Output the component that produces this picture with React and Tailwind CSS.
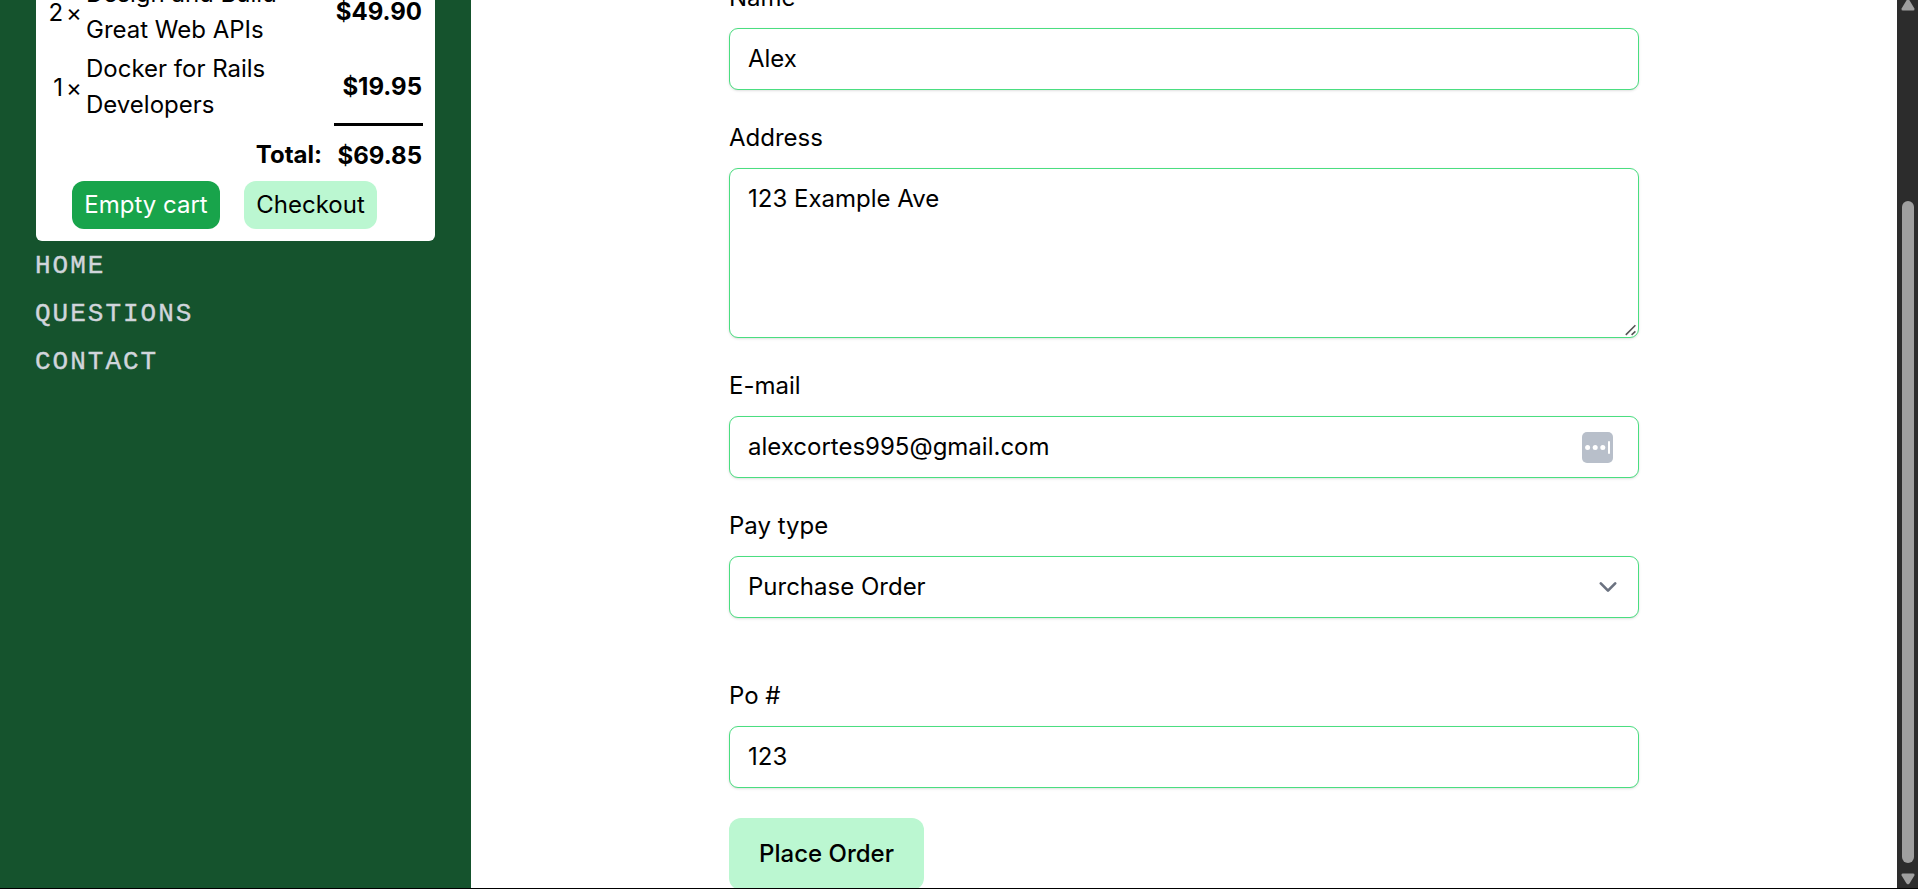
const field =
  "block w-full rounded-[9px] border border-[#4ade80] bg-white px-[18px] py-3 text-2xl leading-9 shadow-sm outline-none";

function Field({ label, className = "", children }) {
  return (
    <div className={className}>
      <label className="block h-9 leading-9">{label}</label>
      <div className="relative mt-3">{children}</div>
    </div>
  );
}

function CartRow({ quantity, lines, price, className = "" }) {
  return (
    <div className={"flex h-[72px] shrink-0 items-center " + className}>
      <div className="w-[38px] shrink-0 pt-px text-right whitespace-nowrap">
        {quantity}
        <span className="ml-[3px]">×</span>
      </div>
      <div className="ml-1 flex-1 whitespace-nowrap">
        {lines.map((line) => (
          <div key={line}>{line}</div>
        ))}
      </div>
      <div className="pr-px pb-px font-bold">{price}</div>
    </div>
  );
}

function Sidebar() {
  return (
    <aside className="h-full w-[471px] shrink-0 overflow-hidden bg-[#15532d] px-9">
      <div className="flex h-[241px] w-[399px] flex-col justify-end rounded-b-md bg-white pr-3 pb-3 pl-2">
        <CartRow quantity="2" lines={["Design and Build", "Great Web APIs"]} price="$49.90" className="mb-[3px]" />
        <CartRow quantity="1" lines={["Docker for Rails", "Developers"]} price="$19.95" />
        <div className="flex h-[58px] shrink-0 items-start justify-end font-bold">
          <div className="mr-3 pt-[14px]">Total:</div>
          <div className="w-[89px] border-t-[3px] border-black pt-3 pr-px text-right">$69.85</div>
        </div>
        <div className="ml-7 flex shrink-0 gap-6">
          <button className="h-12 w-[148px] rounded-xl bg-[#18a44b] text-white">Empty cart</button>
          <button className="h-12 w-[133px] rounded-xl bg-[#bbf7d1]">Checkout</button>
        </div>
      </div>
      <nav className="-ml-px pt-px font-['Liberation_Mono',monospace] text-[26px] tracking-[2px] text-gray-300 [-webkit-text-stroke:0.4px_#d1d5db]">
        {["HOME", "QUESTIONS", "CONTACT"].map((item) => (
          <a key={item} className="block h-12 leading-[48px]">{item}</a>
        ))}
      </nav>
    </aside>
  );
}

function Scrollbar() {
  return (
    <div className="flex h-full w-[21px] shrink-0 flex-col items-center bg-[#2c2c2c] pl-px">
      <svg width="14" height="11" viewBox="0 0 14 11" fill="#9f9f9f">
        <path d="M5.7 0 L8.3 0 L13.4 8.4 Q14 10.6 12 10.6 L2 10.6 Q0 10.6 .6 8.4Z" />
      </svg>
      <div className="mt-[190px] h-[662px] w-3 rounded-full bg-[#9f9f9f]" />
      <svg className="mt-[10px]" width="14" height="12" viewBox="0 0 14 12" fill="#9f9f9f">
        <path d="M2 .4 L12 .4 Q14 .4 13.4 2.6 L8.5 10.6 Q7 12.2 5.5 10.6 L.6 2.6 Q0 .4 2 .4Z" />
      </svg>
    </div>
  );
}

export default function App() {
  return (
    <div className="h-[889px] w-[1918px] overflow-hidden bg-black font-['Inter',sans-serif] text-2xl leading-9 text-black">
      <div className="flex h-[888px] overflow-hidden">
        <Sidebar />
        <main className="flex h-full flex-1 justify-center overflow-hidden bg-white">
          <form className="-mt-5 w-[910px]">
            <Field label="Name">
              <input className={field} defaultValue="Alex" />
            </Field>
            <Field label="Address" className="mt-[30px]">
              <textarea className={field + " h-[170px] resize-none"} defaultValue="123 Example Ave" />
              <svg
                className="absolute right-[2px] bottom-[1px]"
                width="13"
                height="13"
                viewBox="0 0 13 13"
                fill="none"
                stroke="#555"
                strokeWidth="1.6"
              >
                <path d="M1.8 10.9L11.4 1.2M7.6 10.9l3.8-3.6" />
              </svg>
            </Field>
            <Field label="E-mail" className="mt-[30px]">
              <input className={field} defaultValue="alexcortes995@gmail.com" />
              <svg className="absolute top-4 right-[26px]" width="31" height="31" viewBox="0 0 31 31">
                <rect width="31" height="31" rx="5" fill="#b8bfca" />
                <g fill="white">
                  <circle cx="5.6" cy="15.5" r="2.5" />
                  <circle cx="13.2" cy="15.5" r="2.5" />
                  <circle cx="20.8" cy="15.5" r="2.5" />
                  <rect x="26" y="9" width="2" height="13" rx="1" />
                </g>
              </svg>
            </Field>
            <Field label="Pay type" className="mt-[30px]">
              <select className={field + " appearance-none"} defaultValue="Purchase Order">
                <option>Purchase Order</option>
              </select>
              <svg
                className="pointer-events-none absolute top-[13px] right-[13px]"
                width="36"
                height="36"
                viewBox="0 0 20 20"
                fill="none"
                stroke="#6b7280"
                strokeWidth="1.5"
                strokeLinecap="round"
                strokeLinejoin="round"
              >
                <path d="M6 8l4 4 4-4" />
              </svg>
            </Field>
            <Field label="Po #" className="mt-[60px]">
              <input className={field} defaultValue="123" />
            </Field>
            <button className="mt-[30px] block h-[72px] w-[195px] rounded-xl bg-[#bbf7d1] font-medium">
              Place Order
            </button>
          </form>
        </main>
        <Scrollbar />
      </div>
    </div>
  );
}
